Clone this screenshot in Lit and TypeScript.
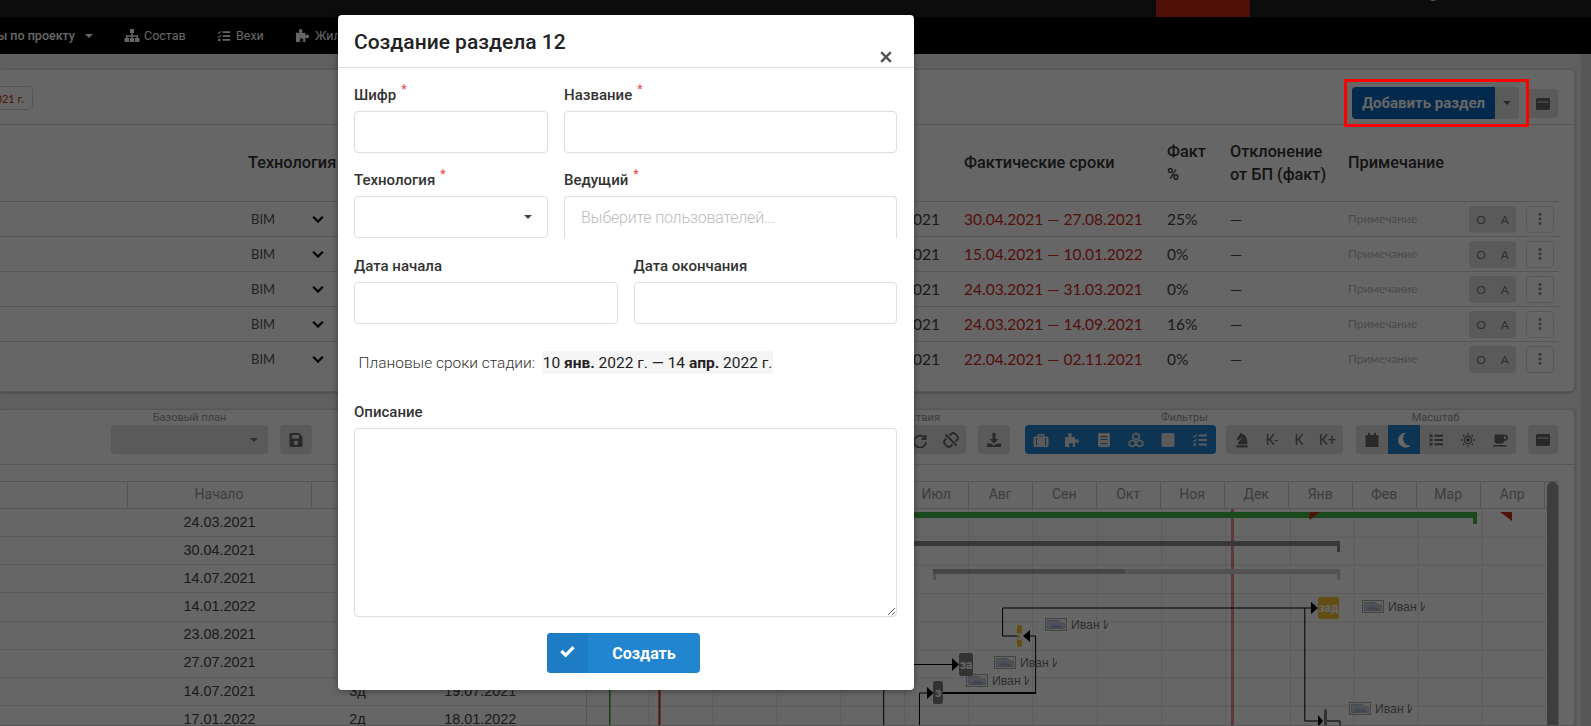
import { LitElement, html, css, svg } from "lit";
import { customElement } from "lit/decorators.js";

const P = {
  sitemap: "M6 1h4v4H8.7v2.2H14V10h1.5v4H11v-4h1.5V8.7H8.7V10h1.5v4H5.8v-4h1.5V8.7H3.5V10H5v4H.5v-4H2V7.2h5.3V5H6z",
  tasks: "M6.5 2.5H15v2H6.5zM6.5 7H15v2H6.5zM6.5 11.5H15v2H6.5zM1.8 3.5l.8.8L4.3 2l.9.7-2.5 3.1L.9 4.3zM1.8 8l.8.8 1.7-2.3.9.7-2.5 3.1L.9 8.8zM1.3 11.2h2.6v2.6H1.3z",
  puzzle: "M1 5h4c-.5-.7-1-1.3-1-2a2 2 0 0 1 4 0c0 .7-.5 1.3-1 2h4v3c.7-.5 1.3-1 2-1a2 2 0 0 1 0 4c-.7 0-1.3-.5-2-1v5H8c.5-.7 1-1.3 1-2a2 2 0 0 0-4 0c0 .7.5 1.3 1 2H1z",
  win: "M2.5 2h11A1.5 1.5 0 0 1 15 3.5v9a1.5 1.5 0 0 1-1.5 1.5h-11A1.5 1.5 0 0 1 1 12.5v-9A1.5 1.5 0 0 1 2.5 2zM2.5 5.5v1h11v-1z",
  save: "M2.5 1H11l3.5 3.5v9a1.5 1.5 0 0 1-1.5 1.5H3a1.5 1.5 0 0 1-1.5-1.5v-11A1.5 1.5 0 0 1 2.5 1zM4 3v3.5h7V3zM8 8.5a2.2 2.2 0 1 0 0 4.4 2.2 2.2 0 0 0 0-4.4z",
  download: "M6.5 1h3v6h3L8 11.5 3.5 7h3zM1 11.5h4l3 2 3-2h4V15H1z",
  case: "M5.5 2h5a1 1 0 0 1 1 1v1.5H14A1.5 1.5 0 0 1 15.5 6v7.5A1.5 1.5 0 0 1 14 15H2A1.5 1.5 0 0 1 .5 13.5V6A1.5 1.5 0 0 1 2 4.5h2.5V3a1 1 0 0 1 1-1zM6 3.5v1h4v-1zM3 6v7.5h1V6zM12 6v7.5h1V6z",
  book: "M3.5 1h9A1.5 1.5 0 0 1 14 2.5v11a1.5 1.5 0 0 1-1.5 1.5h-9A1.5 1.5 0 0 1 2 13.5v-11A1.5 1.5 0 0 1 3.5 1zM5 4v1h6V4zM5 7v1h6V7zM5 11v1h6v-1z",
  square: "M3 1h10a1.5 1.5 0 0 1 1.5 1.5v11A1.5 1.5 0 0 1 13 15H3a1.5 1.5 0 0 1-1.5-1.5v-11A1.5 1.5 0 0 1 3 1z",
  knight: "M2.5 15.5v-2.3h11v2.3zM4 12.2c0-3 3.6-4.4 4.2-6.4l-2.2 1-1.4 1.6L2.5 7l3.2-4.4L6.5.5l2 1.7c3.6.5 5 4.6 5 10z",
  calendar: "M4 .8h2V3h4V.8h2V3h2.5v12h-13V3H4z",
  moon: "M10 .8a7.4 7.4 0 1 0 4.8 12.6A7 7 0 0 1 10 .8z",
  list: "M1.5 2.5h3v2.4h-3zM6.5 2.7H15v2H6.5zM1.5 6.8h3v2.4h-3zM6.5 7H15v2H6.5zM1.5 11.1h3v2.4h-3zM6.5 11.3H15v2H6.5z",
  sun: "M8 .3l1.2 2.2H6.8zM8 15.7l1.2-2.2H6.8zM.3 8l2.2-1.2v2.4zM15.7 8l-2.2-1.2v2.4zM2.6 2.6l2.4.7-1.7 1.7zM13.4 2.6l-2.4.7 1.7 1.7zM2.6 13.4l2.4-.7-1.7-1.7zM13.4 13.4l-2.4-.7 1.7-1.7zM8 3.6a4.4 4.4 0 1 0 0 8.8 4.4 4.4 0 0 0 0-8.8zM8 4.9a3.1 3.1 0 1 1 0 6.2 3.1 3.1 0 0 1 0-6.2zM8 6a2 2 0 1 0 0 4 2 2 0 0 0 0-4z",
  coffee: "M2.5 2.5h10.2a3.2 3.2 0 0 1 0 6.4H12A2.8 2.8 0 0 1 9.2 11.5H5.3a2.8 2.8 0 0 1-2.8-2.8zM12 4.3v2.8h.7a1.4 1.4 0 0 0 0-2.8zM1 13h13.5v1.6H1z",
  check: "M1.2 8.6l2.2-2.2 2.9 2.9 6.3-6.5 2.2 2.2-8.5 8.7z",
  times: "M3.5 1.5 8 6l4.5-4.5 2 2L10 8l4.5 4.5-2 2L8 10l-4.5 4.5-2-2L6 8 1.5 3.5z",
  dots: "M8 1.2a1.7 1.7 0 1 1 0 3.4 1.7 1.7 0 0 1 0-3.4zM8 6.3a1.7 1.7 0 1 1 0 3.4 1.7 1.7 0 0 1 0-3.4zM8 11.4a1.7 1.7 0 1 1 0 3.4 1.7 1.7 0 0 1 0-3.4z",
};
const S = {
  redo: "M13.5 3v4h-4M13.3 6.8A6 6 0 1 0 14 10",
  unlink: "M6.5 3.5 8 2a3 3 0 0 1 4.2 0l1.8 1.8a3 3 0 0 1 0 4.2l-1.5 1.5M9.5 12.5 8 14a3 3 0 0 1-4.2 0L2 12.2A3 3 0 0 1 2 8l1.5-1.5M2.5 2.5l11 11",
  cubes: "M8 1.5l3 1.5v3.2L8 7.7 5 6.2V3zM4.3 8.3l3 1.5V13l-3 1.5-3-1.5V9.8zM11.7 8.3l3 1.5V13l-3 1.5-3-1.5V9.8z",
  chevron: "M2.5 5.5 8 11l5.5-5.5",
};
const ico = (d: string, size = 16) =>
  html`<svg class="ico" width=${size} height=${size} viewBox="0 0 16 16"><path fill="currentColor" fill-rule="evenodd" d=${d}></path></svg>`;
const line = (d: string, size = 16, w = 1.8) =>
  html`<svg class="ico" width=${size} height=${size} viewBox="0 0 16 16"><path fill="none" stroke="currentColor" stroke-width=${w} d=${d}></path></svg>`;

const rows = [
  ["30.04.2021 — 27.08.2021", "25%"],
  ["15.04.2021 — 10.01.2022", "0%"],
  ["24.03.2021 — 31.03.2021", "0%"],
  ["24.03.2021 — 14.09.2021", "16%"],
  ["22.04.2021 — 02.11.2021", "0%"],
];
const ganttRows: [string, string, string][] = [
  ["24.03.2021", "", ""],
  ["30.04.2021", "", ""],
  ["14.07.2021", "", ""],
  ["14.01.2022", "", ""],
  ["23.08.2021", "", ""],
  ["27.07.2021", "", ""],
  ["14.07.2021", "3д", "19.07.2021"],
  ["17.01.2022", "2д", "18.01.2022"],
];
const months = ["Июл", "Авг", "Сен", "Окт", "Ноя", "Дек", "Янв", "Фев", "Мар", "Апр"];
const people = [
  [1045, 617],
  [994, 655],
  [966, 673],
  [1362, 599],
  [1349, 701],
];
const OX = 587;
const OY = 508;
const hLines = [536, 564, 592.5, 621, 649, 677, 705];
const vLines = [648.7, 712.7, 776.7, 840.7, 904.7, 968.7, 1032.7, 1097, 1161.7, 1226, 1290.4, 1354, 1418, 1482];

@customElement("app-root")
export class AppRoot extends LitElement {
  static styles = css`
    :host { display: block; position: relative; width: 1591px; height: 726px; overflow: hidden; background: #f0f0f0; font-family: Roboto, "Liberation Sans", sans-serif; color: #333; }
    * { box-sizing: border-box; }
    .ico { display: block; flex: none; }
    .page { width: 1591px; height: 726px; display: flex; flex-direction: column; }
    .top { height: 17px; flex: none; background: #1e1e1e; display: flex; overflow: hidden; }
    .top .red { margin-left: 1156px; width: 94px; background: #c82814; }
    .top .av { margin-left: 177px; width: 12px; height: 12px; margin-top: -11px; border-radius: 50%; background: #ccc; }
    .nav { height: 37px; flex: none; background: #000; color: #fff; display: flex; align-items: center; font-size: 12.5px; white-space: nowrap; }
    .nav span { display: flex; align-items: center; }
    .nav .a { margin-left: -9px; width: 133px; font-weight: 500; }
    .nav .caret { margin-left: 10px; }
    .nav .b { width: 93px; gap: 4px; }
    .nav .c { width: 78px; gap: 5px; }
    .nav .d { gap: 5px; }
    .caret { width: 0; height: 0; border-left: 4px solid transparent; border-right: 4px solid transparent; border-top: 4px solid currentColor; flex: none; }
    .body { flex: 1; min-height: 0; display: flex; background: #f0f0f0; }
    .main { width: 1581px; padding: 15px 6px 0 0; display: flex; flex-direction: column; gap: 17px; min-height: 0; }
    .track { width: 10px; background: #dadada; }
    .panel { background: #fff; border: 1px solid #d4d4d5; border-left: 0; border-radius: 0 4px 4px 0; box-shadow: 0 1px 3px rgba(0,0,0,.25); }
    .p1 { height: 323px; flex: none; }
    .p1head { height: 55px; padding: 17px 16px 0 0; display: flex; align-items: flex-start; border-bottom: 1px solid #d4d4d5; }
    .chip { margin: -1px 0 0 -20px; width: 53px; height: 24px; border: 1px solid #d4d4d5; border-radius: 5px; color: #c8281c; font-size: 11px; display: flex; align-items: center; justify-content: flex-end; padding-right: 8px; font-family: Lato, sans-serif; }
    .addbtn { margin-left: auto; height: 32px; display: flex; border-radius: 4px; overflow: hidden; width: 167px; }
    .addbtn b { flex: 1; background: #0868bd; color: #fff; font-size: 15px; font-weight: 700; display: flex; align-items: center; justify-content: center; white-space: nowrap; }
    .addbtn i { width: 24px; background: #e0e1e2; color: #666; display: flex; align-items: center; justify-content: center; }
    .winbtn { margin-left: 8px; margin-top: 2px; width: 31px; height: 29px; background: #e0e1e2; color: #666; border-radius: 4px; display: flex; align-items: center; justify-content: center; }
    .tbl { margin-right: 15px; }
    .grid { display: grid; grid-template-columns: 248px 92px 564px 60px 203px 63px 118px 121px 1fr; align-items: center; }
    .thead { height: 76px; font-size: 16.3px; font-weight: 500; color: #333; line-height: 23px; padding-bottom: 1px; white-space: nowrap; }
    .tr { height: 35px; border-top: 1px solid #d4d4d5; font-family: Lato, sans-serif; font-size: 15.5px; color: #444; padding-bottom: 1px; }
    .bim { display: flex; align-items: center; font-size: 13px; padding-left: 3px; color: #555; }
    .bim svg { margin-left: 36px; color: #111; }
    .pl { text-align: right; padding-right: 30px; }
    .red { color: #d0281c; white-space: nowrap; }
    .note { font-size: 12px; color: #bbb; }
    .rbtns { display: flex; gap: 10px; margin-bottom: -1px; }
    .oa { width: 47px; height: 27px; background: #e0e1e2; border-radius: 4px; color: #777; font-size: 12px; display: flex; align-items: center; justify-content: center; gap: 15px; }
    .more { width: 28px; height: 27px; border: 1px solid #ddd; border-radius: 4px; color: #888; display: flex; align-items: center; justify-content: center; }

    .p2 { flex: 1; min-height: 0; border-radius: 0 4px 0 0; display: flex; flex-direction: column; overflow: hidden; }
    .bar { height: 55px; flex: none; padding: 1px 16px 0 0; display: flex; align-items: flex-start; border-bottom: 1px solid #d4d4d5; }
    .blk { display: flex; flex-direction: column; align-items: center; }
    .blk small { height: 14px; line-height: 14px; font-size: 11px; color: #999; white-space: nowrap; }
    .ctl { height: 29px; border-radius: 4px; background: #e0e1e2; color: #666; display: flex; align-items: stretch; }
    .ctl > span { display: flex; align-items: center; justify-content: center; width: 32px; flex: none; font-size: 14px; }
    .sel { width: 157px; padding-right: 10px; justify-content: flex-end; align-items: center; color: #777; }
    .b1 { margin-left: 111px; }
    .b2 { margin-left: 12px; margin-top: 14px; }
    .b3 { margin-left: auto; width: 102.5px; }
    .b3 .ctl { width: 100%; justify-content: flex-end; }
    .b3 .ctl > span { width: 31px; }
    .b4 { margin-left: 11.5px; margin-top: 14px; }
    .b5 { margin-left: 15px; }
    .b5 small { margin-left: 128px; }
    .blue { background: #2185d0; color: #e0e1e2; overflow: hidden; }
    .b5 .ctl > span { width: 31.9px; }
    .b6 { margin-left: 10px; margin-top: 14px; }
    .b6 .w1 { width: 32px; } .b6 .w2 { width: 28px; } .b6 .w3 { width: 26px; } .b6 .w4 { width: 31px; }
    .b7 { margin-left: 12.5px; }
    .b7 .ctl { overflow: hidden; }
    .act { background: #2185d0; color: #fff; }
    .b8 { margin-left: 12.5px; margin-top: 14px; }
    .b8 .ctl > span { width: 30px; }
    .gt { margin: 16px 15px 0 0; border-top: 1px solid #d4d4d5; border-right: 1px solid #d4d4d5; flex: 1; min-height: 0; display: flex; flex-direction: column; position: relative; overflow: hidden; }
    .ghead { height: 27px; flex: none; display: flex; border-bottom: 1px solid #d4d4d5; color: #999; font-size: 14px; padding-bottom: 2px; }
    .cols { display: grid; grid-template-columns: 127.5px 184px 275.5px; align-items: center; margin-bottom: -2px; }
    .cols > div { height: 100%; display: flex; align-items: center; justify-content: center; border-right: 1px solid #d4d4d5; padding-bottom: 2px; }
    .mhead { display: flex; padding-left: 317.7px; margin-bottom: -2px; }
    .mhead div { width: 64px; display: flex; align-items: center; justify-content: center; border-right: 1px solid #d4d4d5; padding-bottom: 2px; }
    .gbody { flex: 1; min-height: 0; display: flex; }
    .gleft { width: 587px; flex: none; border-right: 1px solid #d4d4d5; }
    .grow { height: 28.17px; display: grid; grid-template-columns: 127.5px 184px 92px 183.5px; align-items: center; border-bottom: 1px solid #e4e4e4; font-family: "Liberation Sans", sans-serif; font-size: 14.4px; color: #444; padding-bottom: 2px; }
    .grow span { text-align: center; }
    .grow span:last-child { padding-right: 30px; }
    .canvas { position: relative; flex: 1; min-width: 0; }
    .canvas > svg { position: absolute; left: 0; top: 0; }
    .who { position: absolute; display: flex; align-items: center; gap: 4px; height: 13px; }
    .who .pic { width: 22px; height: 13px; flex: none; display: block; }
    .who em { font-style: normal; font-family: "Liberation Sans", sans-serif; font-size: 12.2px; width: 37px; overflow: hidden; white-space: nowrap; color: #777; line-height: 14px; }
    .tk { position: absolute; color: #fff; font-size: 12px; font-weight: 700; overflow: hidden; white-space: nowrap; display: flex; align-items: center; justify-content: center; border-radius: 2px; }
    .sb { position: absolute; left: 1546.5px; top: 0; width: 11px; height: 100%; border-radius: 5px 5px 0 0; background: #999; }

    .ovl { position: absolute; inset: 0; background: rgba(0,0,0,.6); }
    .frame { position: absolute; left: 1344px; top: 79px; width: 185px; height: 48px; border: 3px solid #f00; }
    .modal { position: absolute; left: 338px; top: 15px; width: 576px; height: 675px; background: #fff; border-radius: 4px; box-shadow: 0 1px 6px rgba(0,0,0,.4); display: flex; flex-direction: column; }
    .mh { height: 53px; flex: none; border-bottom: 1px solid #ddd; position: relative; padding: 15px 0 0 16px; font-size: 21px; font-weight: 500; color: #222; line-height: 24px; }
    .x { position: absolute; right: 21px; top: 35px; color: #555; }
    .mb { padding: 19px 17px 16px 16px; display: flex; flex-direction: column; flex: 1; }
    .r1 { display: grid; grid-template-columns: 194px 1fr; column-gap: 16px; margin-bottom: 19px; }
    .r3 { display: grid; grid-template-columns: 1fr 1fr; column-gap: 16px; }
    .lab { display: flex; font-size: 15px; font-weight: 500; color: #333; height: 16px; line-height: 16px; margin-bottom: 8px; white-space: nowrap; }
    .lab sup { color: #e85050; font-size: 12px; line-height: 10px; margin: -3px 0 0 5px; height: 10px; }
    .inp { height: 42px; border: 1px solid #dedede; border-radius: 4px; background: #fff; display: flex; align-items: center; color: #444; font-size: 16px; width: 100%; outline: none; padding: 0 16px; }
    .dd { justify-content: flex-end; padding-right: 15px; }
    .ms { border-bottom: 0; border-radius: 4px 4px 0 0; color: #bbb; font-size: 16px; font-weight: 300; letter-spacing: -.2px; }
    .plan { margin: 27px 0 0 4.5px; height: 23px; display: flex; align-items: center; font-size: 15.5px; font-weight: 300; color: #333; white-space: pre; }
    .plan mark { position: relative; margin-left: 3px; background: #f5f5f5; height: 23px; padding: 0 1px; display: flex; align-items: center; font-weight: 400; color: #222; white-space: pre; }
    .plan mark b { font-weight: 700; }
    .dsc { margin-top: 30px; }
    textarea.inp { height: 189px; display: block; resize: vertical; font-family: inherit; padding: 10px 16px; }
    .sub { margin: 16px 0 0 193px; width: 153px; height: 40px; border-radius: 4px; overflow: hidden; display: flex; background: #2185d0; color: #fff; font-weight: 700; font-size: 16px; }
    .sub i { width: 41px; background: #1e7cc4; display: flex; align-items: center; justify-content: center; padding-bottom: 4px; }
    .sub span { flex: 1; display: flex; align-items: center; justify-content: center; }
  `;

  private pic() {
    return html`<svg class="pic" viewBox="0 0 22 13"><rect x=".5" y=".5" width="21" height="12" fill="#f4f4f4" stroke="#aaa"></rect><path d="M2.5 2.5H13L16 5H19.5V10.5H2.5z" fill="#c4cde0" stroke="#999" stroke-width=".6"></path><path d="M3 10.5 9 6l3 2 2-1.5 5 4z" fill="#a4b0cc"></path></svg>`;
  }

  private gantt() {
    const links = [
      "M1002.6 607H1312M1002.6 607V635H1017",
      "M1030 635H1035.6V692",
      "M914 663.5H952",
      "M919.5 726V692H927",
      "M1304.8 607V720H1318",
      "M1327 720H1340V726",
      "M883.7 663V726",
    ];
    return svg`
      ${vLines.map((x) => svg`<line x1=${x} x2=${x} y1="508" y2="726" stroke="#e6e6e6"></line>`)}
      ${hLines.map((y) => svg`<line x1="587" x2="1546" y1=${y} y2=${y} stroke="#e6e6e6"></line>`)}
      <rect x="1231" y="508" width="3" height="218" fill="#ee8a8a"></rect>
      <rect x="609" y="660" width="1.5" height="66" fill="#2da02d"></rect>
      <rect x="658.5" y="660" width="2" height="66" fill="#d02020"></rect>
      <path d="M900 511H1477V523H1473V517H900z" fill="#41b846"></path>
      <path d="M1309.5 511H1320L1309.5 519z" fill="#d02a14"></path>
      <path d="M1500 511H1512V520z" fill="#d02a14"></path>
      <path d="M900 540H1340V551H1337V545H900z" fill="#8c8c8c"></path>
      <path d="M933 568H1340V579H1337V573H936V579H933z" fill="#d0d0d0"></path>
      <rect x="933" y="568" width="192" height="5" fill="#b0b0b0"></rect>
      ${links.map((d) => svg`<path d=${d} fill="none" stroke="#000" stroke-width="1"></path>`)}
      <path d="M943 692H1036" fill="none" stroke="#000" stroke-width="2"></path>
      <path d="M1318 607 1311 601V613z M1023 635 1030 629V641z M959 663.5 952 657V670z M933.5 692 927 686V698z M1323 720 1318 714V726z" fill="#000"></path>
    `;
  }

  render() {
    const who = people.map(
      ([x, y]) => html`<div class="who" style="left:${x - OX}px;top:${y - OY}px">${this.pic()}<em>Иван Иванов</em></div>`
    );
    const tasks: [number, number, number, number, string, string][] = [
      [1318, 596, 21, 22, "#f5c232", "зад"],
      [1017, 624, 5, 22, "#f5c232", "з"],
      [959, 652, 14, 23, "#808080", "за"],
      [933, 680, 10, 23, "#808080", "з"],
      [1324, 708, 3, 18, "#808080", ""],
    ];
    return html`
      <div class="page">
        <div class="top"><div class="red"></div><div class="av"></div></div>
        <div class="nav">
          <span class="a">ты по проекту<i class="caret"></i></span>
          <span class="b">${ico(P.sitemap)}Состав</span>
          <span class="c">${ico(P.tasks, 14)}Вехи</span>
          <span class="d">${ico(P.puzzle, 15)}Жилые</span>
        </div>
        <div class="body">
          <div class="main">
            <section class="panel p1">
              <div class="p1head">
                <div class="chip">2021 г.</div>
                <div class="addbtn"><b>Добавить раздел</b><i><span class="caret"></span></i></div>
                <div class="winbtn">${ico(P.win)}</div>
              </div>
              <div class="tbl">
                <div class="grid thead">
                  <span></span><span>Технология</span><span></span><span></span>
                  <span>Фактические сроки</span><span>Факт<br />%</span><span>Отклонение<br />от БП (факт)</span><span>Примечание</span><span></span>
                </div>
                ${rows.map(
                  ([d, p]) => html`<div class="grid tr">
                    <span></span>
                    <span class="bim">BIM${line(S.chevron, 14, 2.6)}</span>
                    <span></span>
                    <span class="pl">2021</span>
                    <span class="red">${d}</span>
                    <span>${p}</span>
                    <span>—</span>
                    <span class="note">Примечание</span>
                    <span class="rbtns"><span class="oa"><span>О</span><span>А</span></span><span class="more">${ico(P.dots, 14)}</span></span>
                  </div>`
                )}
              </div>
            </section>
            <section class="panel p2">
              <div class="bar">
                <div class="blk b1"><small>Базовый план</small><div class="ctl sel"><i class="caret"></i></div></div>
                <div class="blk b2"><div class="ctl"><span>${ico(P.save)}</span></div></div>
                <div class="blk b3"><small>Действия</small><div class="ctl"><span>${line(S.redo)}</span><span>${line(S.unlink)}</span></div></div>
                <div class="blk b4"><div class="ctl"><span>${ico(P.download)}</span></div></div>
                <div class="blk b5"><small>Фильтры</small><div class="ctl blue">
                  <span>${ico(P.case)}</span><span>${ico(P.puzzle)}</span><span>${ico(P.book)}</span><span>${line(S.cubes, 16, 1.6)}</span><span>${ico(P.square)}</span><span>${ico(P.tasks)}</span>
                </div></div>
                <div class="blk b6"><div class="ctl">
                  <span class="w1">${ico(P.knight)}</span><span class="w2">К-</span><span class="w3">К</span><span class="w4">К+</span>
                </div></div>
                <div class="blk b7"><small>Масштаб</small><div class="ctl">
                  <span>${ico(P.calendar)}</span><span class="act">${ico(P.moon)}</span><span>${ico(P.list)}</span><span>${ico(P.sun)}</span><span>${ico(P.coffee)}</span>
                </div></div>
                <div class="blk b8"><div class="ctl"><span>${ico(P.win)}</span></div></div>
              </div>
              <div class="gt">
                <div class="ghead">
                  <div class="cols"><div></div><div>Начало</div><div></div></div>
                  <div class="mhead">${months.map((m) => html`<div>${m}</div>`)}</div>
                </div>
                <div class="gbody">
                  <div class="gleft">
                    ${ganttRows.map(
                      ([a, b, c]) => html`<div class="grow"><span></span><span>${a}</span><span>${b}</span><span>${c}</span></div>`
                    )}
                  </div>
                  <div class="canvas">
                    <svg width="972" height="218" viewBox="${OX} ${OY} 972 218">${this.gantt()}</svg>
                    ${who}
                    ${tasks.map(
                      ([x, y, w, h, c, t]) => html`<div class="tk" style="left:${x - OX}px;top:${y - OY}px;width:${w}px;height:${h}px;background:${c}">${t}</div>`
                    )}
                  </div>
                </div>
                <div class="sb"></div>
              </div>
            </section>
          </div>
          <div class="track"></div>
        </div>
      </div>
      <div class="ovl"></div>
      <div class="frame"></div>
      <div class="modal">
        <div class="mh">Создание раздела 12<span class="x">${ico(P.times, 14)}</span></div>
        <div class="mb">
          <div class="r1">
            <div><div class="lab">Шифр<sup>*</sup></div><input class="inp" /></div>
            <div><div class="lab">Название<sup>*</sup></div><input class="inp" /></div>
          </div>
          <div class="r1" style="margin-bottom:20px">
            <div><div class="lab">Технология<sup>*</sup></div><div class="inp dd"><i class="caret"></i></div></div>
            <div><div class="lab">Ведущий<sup>*</sup></div><div class="inp ms">Выберите пользователей...</div></div>
          </div>
          <div class="r3">
            <div><div class="lab">Дата начала</div><input class="inp" /></div>
            <div><div class="lab">Дата окончания</div><input class="inp" /></div>
          </div>
          <div class="plan">Плановые сроки стадии: <mark>10 <b>янв.</b> 2022 г. — 14 <b>апр.</b> 2022 г.</mark></div>
          <div class="lab dsc">Описание</div>
          <textarea class="inp"></textarea>
          <div class="sub"><i>${ico(P.check, 17)}</i><span>Создать</span></div>
        </div>
      </div>
    `;
  }
}
